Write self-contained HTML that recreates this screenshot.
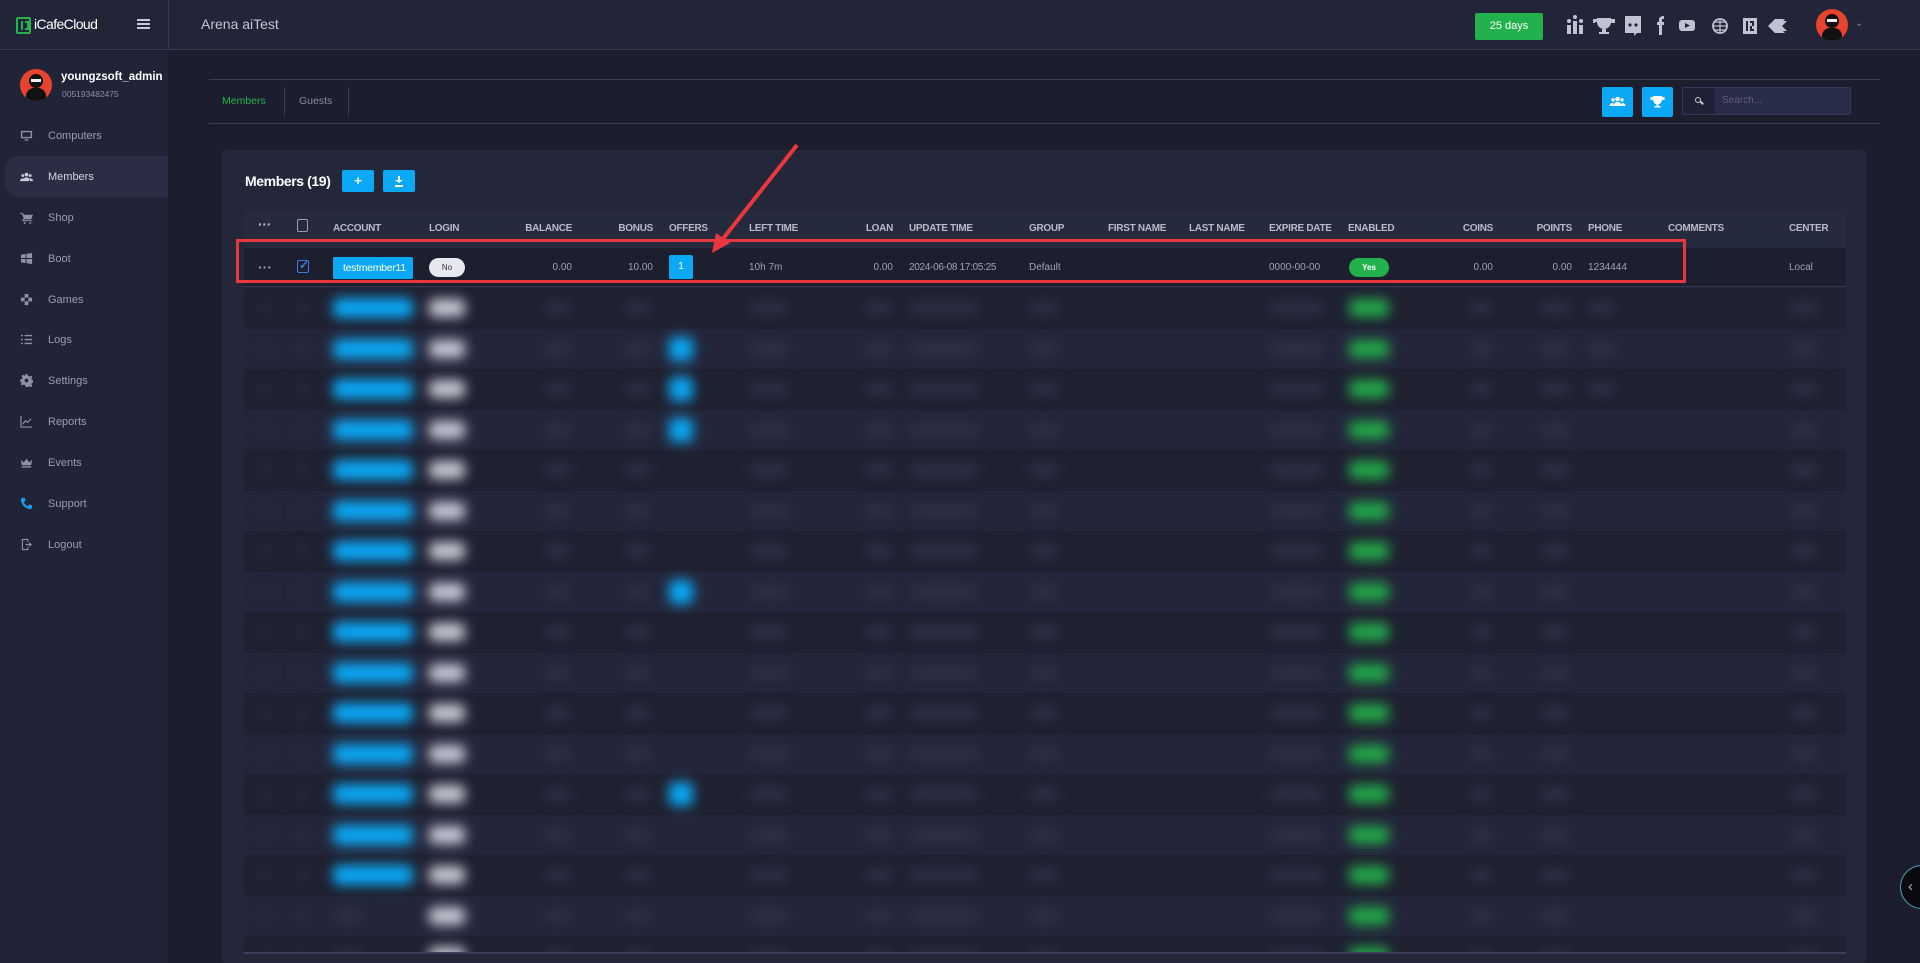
<!DOCTYPE html>
<html><head><meta charset="utf-8">
<style>
*{box-sizing:border-box;margin:0;padding:0}
html,body{width:1920px;height:963px;overflow:hidden}
body{background:#1c1e2d;font-family:"Liberation Sans",sans-serif;color:#c9cbd6;position:relative}
#wrap{position:absolute;left:0;top:0;width:1920px;height:963px;overflow:hidden}
.a{position:absolute}
#top{left:0;top:0;width:1920px;height:50px;background:#222538;border-bottom:1px solid #35384f}
#side{left:0;top:51px;width:168px;height:912px;background:#212436}
.mi{position:absolute;left:20px;font-size:11px;color:#9a9db0;display:flex;align-items:center}
.mi svg{width:13px;height:13px;margin-right:15px;fill:#8e92a6}
.th{position:absolute;top:223px;font-size:10px;font-weight:bold;color:#b7bac8;letter-spacing:-.3px}
.td{position:absolute;font-size:10px;color:#a0a3b4}
.r{text-align:right}
</style></head><body><div id="wrap">
<div id="top" class="a"></div>
<div class="a" style="left:168px;top:0;width:1px;height:50px;background:#35384f"></div>
<div class="a" style="left:16px;top:17px;width:15px;height:17px;border:2px solid #25b14c;border-radius:2px"></div>
<div class="a" style="left:21px;top:21px;width:2px;height:9px;background:#25b14c"></div>
<div class="a" style="left:25px;top:21px;width:4px;height:9px;border:2px solid #25b14c;border-left:none"></div>
<div class="a" style="left:34px;top:16px;font-size:14px;color:#fff;letter-spacing:-.6px">iCafeCloud</div>
<div class="a" style="left:137px;top:19px;width:13px;height:2px;background:#c8cad6;box-shadow:0 4px 0 #c8cad6,0 8px 0 #c8cad6"></div>
<div class="a" style="left:201px;top:16px;font-size:14px;color:#c3c5d0">Arena aiTest</div>
<div class="a" style="left:1475px;top:13px;width:68px;height:27px;background:#22b14c;border-radius:2px;color:#fff;font-size:11px;text-align:center;line-height:27px">25 days</div>
<svg class="a" style="left:1563px;top:14px" width="250" height="24" viewBox="0 0 250 24" fill="#c0c4d2">
<rect x="4" y="11" width="4" height="9"/><rect x="10" y="7" width="4" height="13"/><rect x="16" y="11" width="4" height="9"/><circle cx="6" cy="7" r="2"/><circle cx="12" cy="3" r="2"/><circle cx="18" cy="7" r="2"/>
<path d="M34 4h14v4a7 7 0 0 1-14 0z M30 5h4v3h-2v1h-2z M48 5h4v4h-4z M39 15h4v3h3v2h-10v-2h3z"/>
<path d="M62 2h16v17h-4l-3 3v-3h-9z" /><circle cx="67" cy="11" r="1.6" fill="#222538"/><circle cx="73" cy="11" r="1.6" fill="#222538"/>
<path d="M96 6c0-3 2-4 5-4v3h-2v3h2v3h-2v10h-3V11h-2V8h2z"/>
<rect x="116" y="6" width="16" height="11" rx="3"/><path d="M122 9l5 2.5-5 2.5z" fill="#222538"/>
<circle cx="157" cy="12" r="7" fill="none" stroke="#c0c4d2" stroke-width="1.8"/><path d="M150 12h14M157 5v14M152 8h10M152 16h10" stroke="#c0c4d2" stroke-width="1.2" fill="none"/>
<path d="M180 4h14v16h-14z M183 7v10h2V7z M187 7h4v5h-2v3h2v2h-4v-5h2V9h-2z" fill-rule="evenodd"/>
<path d="M205 12l7-7h10l-7 7 7 7h-10z M215 12l5-5h4l-5 5 5 5h-4z" />
</svg>
<div class="a" style="left:1816px;top:9px;width:32px;height:32px;border-radius:50%;background:#e8432e;overflow:hidden"><div class="a" style="left:9px;top:5px;width:14px;height:14px;border-radius:50%;background:#111"></div><div class="a" style="left:11px;top:10px;width:10px;height:3px;background:#eee"></div><div class="a" style="left:6px;top:19px;width:20px;height:14px;border-radius:8px 8px 0 0;background:#111"></div></div>
<div class="a" style="left:1855px;top:18px;font-size:10px;color:#8a8da0">&#8964;</div>

<div id="side" class="a"></div>
<div class="a" style="left:20px;top:69px;width:32px;height:32px;border-radius:50%;background:#e8432e;overflow:hidden"><div class="a" style="left:9px;top:5px;width:14px;height:14px;border-radius:50%;background:#111"></div><div class="a" style="left:11px;top:10px;width:10px;height:3px;background:#eee"></div><div class="a" style="left:6px;top:19px;width:20px;height:14px;border-radius:8px 8px 0 0;background:#111"></div></div>
<div class="a" style="left:61px;top:71px;font-size:11.5px;font-weight:bold;color:#fff">youngzsoft_admin</div>
<div class="a" style="left:62px;top:89px;font-size:8.5px;color:#8d90a3">005193482475</div>
<div class="a" style="left:5px;top:156px;width:163px;height:41px;background:#2a2d44;border-radius:14px 0 0 14px"></div>
<div class="mi" style="top:129px"><svg viewBox="0 0 14 14"><path d="M1 2h12v8H1z M2.5 3.5v5h9v-5z M5 11h4v1.5H5z" fill-rule="evenodd"/></svg>Computers</div>
<div class="mi" style="top:170px;color:#d5d7e2"><svg viewBox="0 0 14 14" style="fill:#c9ccd8"><circle cx="7" cy="5" r="2"/><circle cx="3" cy="6" r="1.5"/><circle cx="11" cy="6" r="1.5"/><path d="M3 12a4 4 0 0 1 8 0z M0 12a3 3 0 0 1 3-3h1v3z M14 12a3 3 0 0 0-3-3h-1v3z"/></svg>Members</div>
<div class="mi" style="top:211px"><svg viewBox="0 0 14 14"><path d="M0 2h3l1 2h10l-2 5H5l-1 1h9v1H2l2-3-2-5H0z"/><circle cx="5" cy="13" r="1"/><circle cx="11" cy="13" r="1"/></svg>Shop</div>
<div class="mi" style="top:252px"><svg viewBox="0 0 14 14"><path d="M1 3l5-1v4.5H1z M7 2l6-1v5.5H7z M1 7.5h5V12l-5-1z M7 7.5h6V13l-6-1z"/></svg>Boot</div>
<div class="mi" style="top:293px"><svg viewBox="0 0 14 14"><rect x="5" y="1" width="4" height="4"/><rect x="5" y="9" width="4" height="4"/><rect x="1" y="5" width="4" height="4"/><rect x="9" y="5" width="4" height="4"/></svg>Games</div>
<div class="mi" style="top:333px"><svg viewBox="0 0 14 14"><path d="M1 2h2v1.5H1zM5 2h8v1.5H5zM1 6.3h2v1.5H1zM5 6.3h8v1.5H5zM1 10.5h2V12H1zM5 10.5h8V12H5z"/></svg>Logs</div>
<div class="mi" style="top:374px"><svg viewBox="0 0 14 14"><path d="M6 0h2l.5 2 1.5.7 1.8-1 1.4 1.4-1 1.8.7 1.6 2 .5v2l-2 .5-.7 1.5 1 1.8-1.4 1.4-1.8-1-1.5.7L8 14H6l-.5-2-1.5-.7-1.8 1-1.4-1.4 1-1.8L1 8.5 0 8V6l2-.5.7-1.5-1-1.8 1.4-1.4 1.8 1L5.5 2z"/><circle cx="7" cy="7" r="2" fill="#212436"/></svg>Settings</div>
<div class="mi" style="top:415px"><svg viewBox="0 0 14 14"><path d="M1 1v12h12" stroke="#8e92a6" fill="none" stroke-width="1.2"/><path d="M3 10l3-4 2 2 4-4" stroke="#8e92a6" fill="none" stroke-width="1.2"/></svg>Reports</div>
<div class="mi" style="top:456px"><svg viewBox="0 0 14 14"><path d="M1 4l3 3 3-4 3 4 3-3-1 6H2z M2 11h10v1.5H2z"/></svg>Events</div>
<div class="mi" style="top:497px"><svg viewBox="0 0 14 14" style="fill:#1a9ff0"><path d="M2 1l3 0 1 3-2 1.5c1 2 2.5 3.5 4.5 4.5L10 8l3 1v3l-1.5 1C6 13 1 8 1 2.5z"/></svg>Support</div>
<div class="mi" style="top:538px"><svg viewBox="0 0 14 14"><path d="M2 1h7v3H7.8V2.2H3.2v9.6h4.6V10H9v3H2z M6 6.3h4V4.5l3 2.5-3 2.5V7.7H6z"/></svg>Logout</div>

<div class="a" style="left:209px;top:79px;width:1671px;height:1px;background:#3a3d52"></div>
<div class="a" style="left:209px;top:123px;width:1671px;height:1px;background:#3a3d52"></div>
<div class="a" style="left:222px;top:95px;font-size:10.5px;color:#25b14c">Members</div>
<div class="a" style="left:284px;top:87px;width:1px;height:29px;background:#3a3d52"></div>
<div class="a" style="left:299px;top:95px;font-size:10.5px;color:#8a8da0">Guests</div>
<div class="a" style="left:348px;top:87px;width:1px;height:29px;background:#3a3d52"></div>
<div class="a" style="left:1602px;top:87px;width:31px;height:30px;background:#0aa8f5;border-radius:2px"><svg width="31" height="30" viewBox="0 0 31 30" fill="#fff"><circle cx="15.5" cy="12" r="2.3"/><circle cx="11" cy="13" r="1.7"/><circle cx="20" cy="13" r="1.7"/><path d="M11 19a4.5 4 0 0 1 9 0z M7.5 19a3 3 0 0 1 3.5-3v3z M23.5 19a3 3 0 0 0-3.5-3v3z"/></svg></div>
<div class="a" style="left:1642px;top:87px;width:31px;height:30px;background:#0aa8f5;border-radius:2px"><svg width="31" height="30" viewBox="0 0 31 30" fill="#fff"><path d="M11 9h9v4a4.5 4.5 0 0 1-9 0z M8.5 10h2.5v3h-2.5z M20 10h2.5v3H20z M14.5 17h2v2h2v1.5h-6V19h2z"/></svg></div>
<div class="a" style="left:1682px;top:87px;width:169px;height:28px;background:#292c48;border:1px solid #33375a;border-radius:2px"><div class="a" style="left:0;top:0;width:32px;height:26px;background:#1f2236"></div><div class="a" style="left:12px;top:9px;width:6px;height:6px;border:1.5px solid #ccc;border-radius:50%"></div><div class="a" style="left:17px;top:14px;width:4px;height:1.5px;background:#ccc;transform:rotate(45deg)"></div><div class="a" style="left:39px;top:7px;font-size:10px;color:#5d6079">Search...</div></div>

<div class="a" style="left:222px;top:150px;width:1644px;height:813px;background:#24273a;border-radius:4px"></div>
<div class="a" style="left:245px;top:173px;font-size:14px;font-weight:bold;color:#fff;letter-spacing:-.4px">Members (19)</div>
<div class="a" style="left:342px;top:170px;width:32px;height:22px;background:#0aa8f5;border-radius:2px;color:#fff;text-align:center;font-size:13px;line-height:21px;font-weight:bold">+</div>
<div class="a" style="left:383px;top:170px;width:32px;height:22px;background:#0aa8f5;border-radius:2px"><div class="a" style="left:15px;top:6px;width:2px;height:5px;background:#fff"></div><div class="a" style="left:12px;top:10px;border:4px solid transparent;border-top:3.5px solid #fff;border-bottom:0"></div><div class="a" style="left:12px;top:15px;width:8px;height:1.5px;background:#fff"></div></div>

<div class="a" style="left:244px;top:210px;width:1602px;height:38px;background:#262a3d"></div>
<div class="th" style="left:258px;font-size:14px;top:216px">&middot;&middot;&middot;</div>
<div class="a" style="left:297px;top:219px;width:11px;height:13px;border:1.3px solid #9da0b2;border-radius:2px"></div>
<div class="th" style="left:333px">ACCOUNT</div>
<div class="th" style="left:429px">LOGIN</div>
<div class="th r" style="left:472px;width:100px">BALANCE</div>
<div class="th r" style="left:553px;width:100px">BONUS</div>
<div class="th" style="left:669px">OFFERS</div>
<div class="th" style="left:749px">LEFT TIME</div>
<div class="th r" style="left:793px;width:100px">LOAN</div>
<div class="th" style="left:909px">UPDATE TIME</div>
<div class="th" style="left:1029px">GROUP</div>
<div class="th" style="left:1108px">FIRST NAME</div>
<div class="th" style="left:1189px">LAST NAME</div>
<div class="th" style="left:1269px">EXPIRE DATE</div>
<div class="th" style="left:1348px">ENABLED</div>
<div class="th r" style="left:1393px;width:100px">COINS</div>
<div class="th r" style="left:1472px;width:100px">POINTS</div>
<div class="th" style="left:1588px">PHONE</div>
<div class="th" style="left:1668px">COMMENTS</div>
<div class="th" style="left:1789px">CENTER</div>

<div id="rows" class="a" style="left:0;top:0;width:1920px;height:952px;overflow:hidden"></div>
<div class="a" style="left:244px;top:248px;width:1602px;height:39px;background:#1d1f2e;border-bottom:1px solid #34374e"></div>
<div class="td" style="left:258px;top:259px;font-size:14px;font-weight:bold;color:#9a9db0">&middot;&middot;&middot;</div>
<div class="a" style="left:297px;top:260px;width:12px;height:13px;border:1.5px solid #3b7dde;border-radius:2px"></div>
<div class="a" style="left:299px;top:258px;font-size:12px;color:#3b7dde;font-weight:bold">&#10003;</div>
<div class="a" style="left:333px;top:257px;width:80px;height:22px;background:#0aa8f5;border-radius:2px;color:#fff;font-size:10.5px;line-height:22px;padding-left:10px;overflow:hidden;white-space:nowrap;letter-spacing:-.3px">testmember11</div>
<div class="a" style="left:429px;top:258px;width:36px;height:19px;background:#e6e7ef;border-radius:10px;color:#333;font-size:8px;text-align:center;line-height:19px">No</div>
<div class="td r" style="left:472px;top:262px;width:100px">0.00</div>
<div class="td r" style="left:553px;top:262px;width:100px">10.00</div>
<div class="a" style="left:669px;top:255px;width:24px;height:24px;background:#0aa8f5;border-radius:2px;color:#fff;font-size:10px;text-align:center;line-height:24px">1</div>
<div class="td" style="left:749px;top:262px">10h 7m</div>
<div class="td r" style="left:793px;top:262px;width:100px">0.00</div>
<div class="td" style="left:909px;top:262px;letter-spacing:-.3px">2024-06-08 17:05:25</div>
<div class="td" style="left:1029px;top:262px">Default</div>
<div class="td" style="left:1269px;top:262px">0000-00-00</div>
<div class="a" style="left:1349px;top:258px;width:40px;height:19px;background:#22b14c;border-radius:10px;color:#fff;font-size:8px;font-weight:bold;text-align:center;line-height:19px">Yes</div>
<div class="td r" style="left:1393px;top:262px;width:100px">0.00</div>
<div class="td r" style="left:1472px;top:262px;width:100px">0.00</div>
<div class="td" style="left:1588px;top:262px">1234444</div>
<div class="td" style="left:1789px;top:262px">Local</div>

<div class="a" style="left:236px;top:239px;width:1450px;height:44px;border:3px solid #e8383d"></div>
<svg class="a" style="left:0;top:0" width="1920" height="963"><line x1="797" y1="145" x2="722" y2="240" stroke="#e8383d" stroke-width="4"/><path d="M712 253l4-20 14 10z" fill="#e8383d"/></svg>

<div class="a" style="left:244px;top:952px;width:1602px;height:2px;background:#3a3d5c"></div>
<div class="a" style="left:1900px;top:865px;width:44px;height:44px;border-radius:50%;background:#0a0a0e;border:1.5px solid #4aa6b8"></div>
<div class="a" style="left:1908px;top:878px;font-size:15px;color:#bbb">&lsaquo;</div>
</div>
<script>
var h='',blue=[1,1,1,1,1,1,1,1,1,1,1,1,1,1,1,0,0,0],off=[0,1,1,1,0,0,0,1,0,0,0,0,1,0,0,0,0,0];
for(var i=0;i<17;i++){var t=288+i*40.5,c=t+20;
h+='<div class="a" style="left:244px;top:'+t+'px;width:1602px;height:41px;background:'+(i%2?'#23263a':'#1f2131')+'"></div>';}
h+='<div class="a" style="left:0;top:0;width:1920px;height:963px;filter:blur(6px)">';
function b(x,w,col,hh,c){h+='<div class="a" style="left:'+x+'px;top:'+(c-(hh||12)/2)+'px;width:'+w+'px;height:'+(hh||12)+'px;background:'+col+';border-radius:6px"></div>';}
for(var i=0;i<17;i++){var c=288+i*40.5+20,g='#2f3246';
b(258,14,g,6,c);b(298,10,g,10,c);
if(blue[i])b(333,80,'#0aa8f5',20,c);else b(333,30,g,12,c);
b(429,36,'#c8c9d6',18,c);b(545,26,g,12,c);b(625,26,g,12,c);
if(off[i])b(669,24,'#0aa8f5',24,c);
b(749,40,g,12,c);b(865,28,g,12,c);b(909,70,g,12,c);b(1029,30,g,12,c);
b(1269,55,g,12,c);b(1349,40,'#22a849',18,c);b(1470,22,g,12,c);b(1540,30,g,12,c);if(i<3)b(1588,28,g,12,c);b(1790,28,g,12,c);}
h+='</div>';
document.getElementById('rows').innerHTML=h;
</script>
</body></html>
